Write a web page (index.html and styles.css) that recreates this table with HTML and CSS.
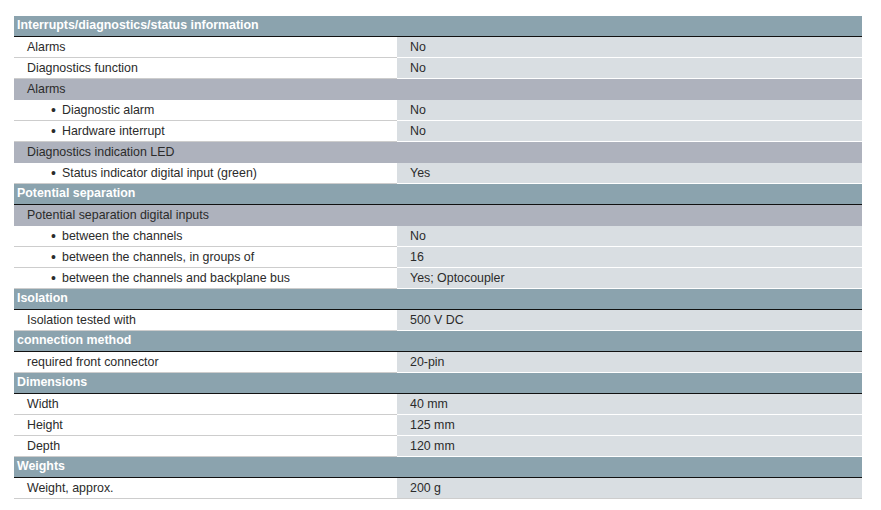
FILE: index.html
```html
<!DOCTYPE html>
<html>
<head>
<meta charset="utf-8">
<link rel="stylesheet" href="styles.css">
</head>
<body>
<div class="spec">
  <div class="sec">Interrupts/diagnostics/status information</div>
  <div class="row"><div class="k">Alarms</div><div class="v">No</div></div>
  <div class="row"><div class="k">Diagnostics function</div><div class="v">No</div></div>
  <div class="sub">Alarms</div>
  <div class="row"><div class="k b"><span class="dot">•</span>Diagnostic alarm</div><div class="v">No</div></div>
  <div class="row"><div class="k b"><span class="dot">•</span>Hardware interrupt</div><div class="v">No</div></div>
  <div class="sub">Diagnostics indication LED</div>
  <div class="row"><div class="k b"><span class="dot">•</span>Status indicator digital input (green)</div><div class="v">Yes</div></div>
  <div class="sec">Potential separation</div>
  <div class="sub">Potential separation digital inputs</div>
  <div class="row"><div class="k b"><span class="dot">•</span>between the channels</div><div class="v">No</div></div>
  <div class="row"><div class="k b"><span class="dot">•</span>between the channels, in groups of</div><div class="v">16</div></div>
  <div class="row"><div class="k b"><span class="dot">•</span>between the channels and backplane bus</div><div class="v">Yes; Optocoupler</div></div>
  <div class="sec">Isolation</div>
  <div class="row"><div class="k">Isolation tested with</div><div class="v">500 V DC</div></div>
  <div class="sec">connection method</div>
  <div class="row"><div class="k">required front connector</div><div class="v">20-pin</div></div>
  <div class="sec">Dimensions</div>
  <div class="row"><div class="k">Width</div><div class="v">40 mm</div></div>
  <div class="row"><div class="k">Height</div><div class="v">125 mm</div></div>
  <div class="row"><div class="k">Depth</div><div class="v">120 mm</div></div>
  <div class="sec">Weights</div>
  <div class="row last"><div class="k">Weight, approx.</div><div class="v">200 g</div></div>
</div>
</body>
</html>
```

FILE: styles.css
```css
html, body {
  margin: 0;
  padding: 0;
  background: #ffffff;
}
body {
  font-family: "Liberation Sans", Arial, sans-serif;
  font-size: 12.4px;
  color: #2b2b2b;
}
.spec {
  width: 848px;
  margin: 16px 0 0 14px;
}
.sec {
  height: 20px;
  line-height: 19px;
  background: #8ba3ae;
  color: #ffffff;
  font-weight: bold;
  padding-left: 3px;
  border-bottom: 1px solid #111111;
  white-space: nowrap;
}
.sub {
  height: 21px;
  line-height: 21px;
  background: #aeb2bd;
  padding-left: 13px;
  white-space: nowrap;
}
.row {
  display: grid;
  grid-template-columns: 383px 1fr;
  height: 21px;
}
.k {
  line-height: 21px;
  padding-left: 13px;
  border-bottom: 1px solid #cdcdcd;
  white-space: nowrap;
  height: 20px;
}
.k.b {
  padding-left: 37px;
}
.dot {
  display: inline-block;
  width: 11px;
  font-size: 14px;
  line-height: 20px;
  vertical-align: top;
}
.v {
  line-height: 21px;
  height: 20px;
  padding-left: 13px;
  background: #d9dee2;
  border-bottom: 1px solid #ffffff;
  white-space: nowrap;
}
.row.last .v {
  border-bottom-color: #cdcdcd;
}
```
